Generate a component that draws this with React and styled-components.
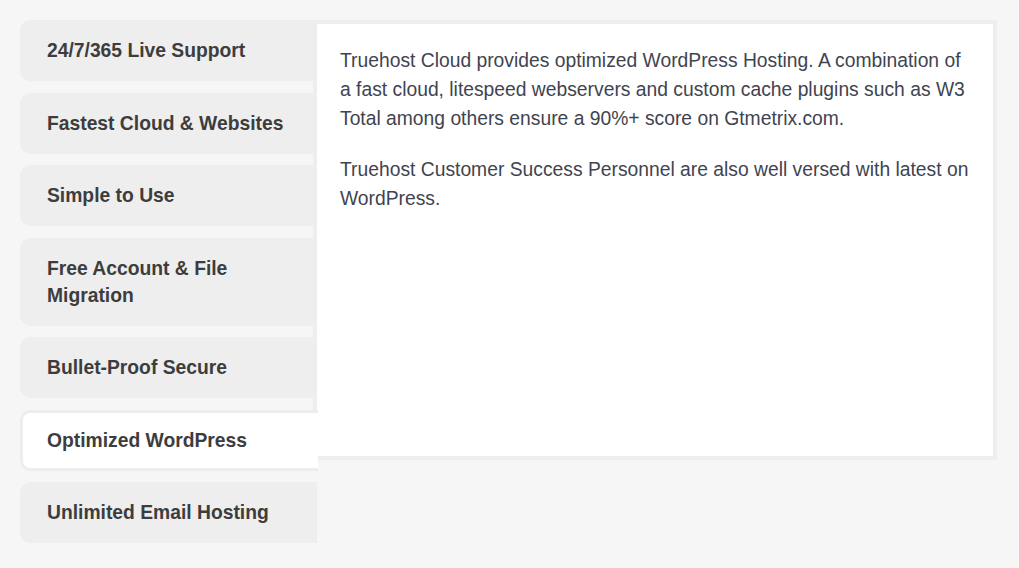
import React, { useState } from "react";
import styled, { createGlobalStyle } from "styled-components";

const GlobalStyle = createGlobalStyle`
  html, body {
    margin: 0;
    padding: 0;
    background: #f6f6f7;
  }
  body {
    font-family: "Liberation Sans", Arial, sans-serif;
  }
`;

const Wrapper = styled.div`
  display: flex;
  align-items: flex-start;
  padding: 20px 22px 20px 20px;
`;

const TabList = styled.div`
  display: flex;
  flex-direction: column;
  gap: 11.5px;
  width: 297px;
  flex-shrink: 0;
  position: relative;
  z-index: 1;
`;

const Tab = styled.div`
  box-sizing: border-box;
  padding: ${(props) => (props.active ? "14px 12px 14px 24px" : "17px 12px 17px 27px")};
  margin-right: ${(props) => (props.active ? "-1px" : "0")};
  border-radius: 10px 0 0 10px;
  background: ${(props) => (props.active ? "#ffffff" : "#eeeeee")};
  border: ${(props) => (props.active ? "3px solid #ededed" : "none")};
  border-right: none;
  color: #3d3d3d;
  font-size: 19.3px;
  font-weight: 700;
  line-height: 27px;
  cursor: pointer;
`;

const Panel = styled.div`
  box-sizing: border-box;
  flex: 1;
  margin-left: -4px;
  height: 440px;
  background: #ffffff;
  border: 4px solid #eeeeee;
  padding: 22px 20px 0 23px;
`;

const Para = styled.p`
  margin: 0 0 22px;
  color: #3f4450;
  font-size: 19.3px;
  line-height: 29px;
`;

const tabs = [
  "24/7/365 Live Support",
  "Fastest Cloud & Websites",
  "Simple to Use",
  "Free Account & File Migration",
  "Bullet-Proof Secure",
  "Optimized WordPress",
  "Unlimited Email Hosting",
];

const App = () => {
  const [active, setActive] = useState(5);

  return (
    <>
      <GlobalStyle />
      <Wrapper>
        <TabList>
          {tabs.map((t, i) => (
            <Tab key={t} active={i === active} onClick={() => setActive(i)}>
              {i === 3 ? (
                <>
                  Free Account &amp; File
                  <br />
                  Migration
                </>
              ) : (
                t
              )}
            </Tab>
          ))}
        </TabList>
        <Panel>
          <Para>
            Truehost Cloud provides optimized WordPress Hosting. A combination of a fast cloud,
            litespeed webservers and custom cache plugins such as W3 Total among others ensure a
            90%+ score on Gtmetrix.com.
          </Para>
          <Para>
            Truehost Customer Success Personnel are also well versed with latest on WordPress.
          </Para>
        </Panel>
      </Wrapper>
    </>
  );
};

export default App;
